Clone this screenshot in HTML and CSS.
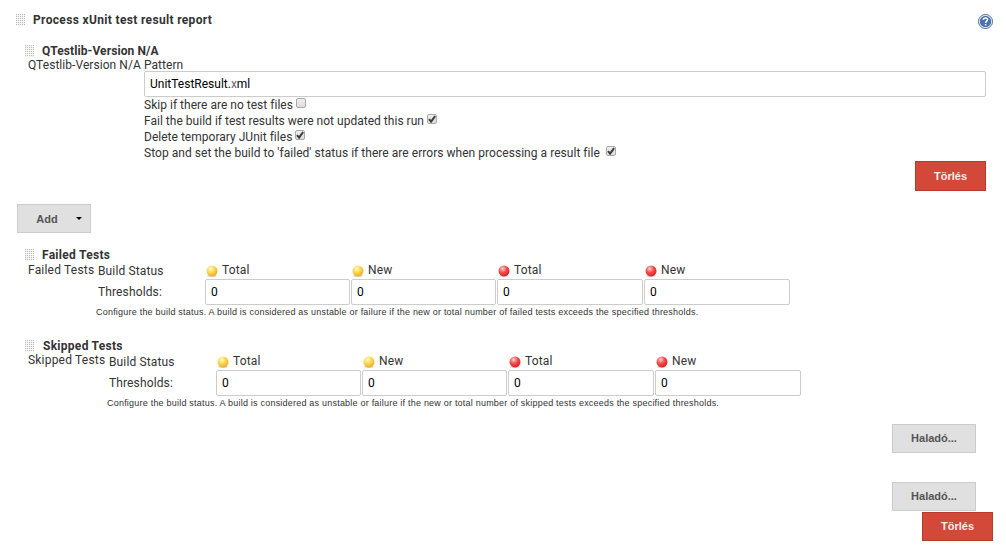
FILE: index.html
```html
<!DOCTYPE html>
<html lang="hu">
<head>
<meta charset="utf-8">
<title>xUnit</title>
<link rel="stylesheet" href="styles.css">
</head>
<body>
<svg width="0" height="0" class="defs">
  <defs>
    <pattern id="dots" width="2" height="2" patternUnits="userSpaceOnUse"><rect width="2" height="2" fill="#f5f5f3"/><rect width="1" height="1" fill="#bcbcb6"/></pattern>
    <radialGradient id="yellow" cx=".38" cy=".3" r=".7"><stop offset="0" stop-color="#fffbd0"/><stop offset=".5" stop-color="#fbd850"/><stop offset="1" stop-color="#f2ae2c"/></radialGradient>
    <radialGradient id="red" cx=".38" cy=".3" r=".7"><stop offset="0" stop-color="#ffd0d0"/><stop offset=".5" stop-color="#f25050"/><stop offset="1" stop-color="#e02020"/></radialGradient>
    <symbol id="grip" viewBox="0 0 10 12"><rect width="9" height="12" fill="url(#dots)"/></symbol>
    <symbol id="ball-y" viewBox="0 0 12 12"><ellipse cx="6" cy="10.8" rx="4.7" ry="1.1" fill="#ccc"/><circle cx="6" cy="5.9" r="5.5" fill="url(#yellow)"/></symbol>
    <symbol id="ball-r" viewBox="0 0 12 12"><ellipse cx="6" cy="10.8" rx="4.7" ry="1.1" fill="#ccc"/><circle cx="6" cy="5.9" r="5.5" fill="url(#red)"/></symbol>
    <symbol id="check" viewBox="0 0 10 10"><path d="M2 5.2 4.1 7.6 8.1 2.2" fill="none" stroke="#3c3c3c" stroke-width="2"/></symbol>
  </defs>
</svg>
<main class="page">
  <header class="title-row">
    <svg class="grip"><use href="#grip"/></svg>
    <b class="w-title">Process xUnit test result report</b>
    <svg class="help" viewBox="0 0 15 15"><circle cx="7.5" cy="7.5" r="7" fill="#fff" stroke="#44689f" stroke-width="1"/><circle cx="7.5" cy="7.5" r="5.7" fill="#4a72ac"/><path d="M5.4 5.8C5.4 3.4 9.6 3.3 9.6 5.6 9.6 7.1 7.6 7.1 7.6 8.9M7.6 10v1.5" fill="none" stroke="#fff" stroke-width="1.5"/></svg>
  </header>

  <section class="qtest">
    <div class="section-title"><svg class="grip"><use href="#grip"/></svg><b class="w-qtitle">QTestlib-Version N/A</b></div>
    <div class="label-row"><span>QTestlib-Version N/A Pattern</span></div>
    <div class="fields">
      <div class="input wide"><span>UnitTestResult.<span class="dim">x</span>ml</span></div>
      <div class="option"><span>Skip if there are no test files</span><i class="box"></i></div>
      <div class="option"><span>Fail the build if test results were not updated this run</span><i class="box"><svg><use href="#check"/></svg></i></div>
      <div class="option"><span>Delete temporary JUnit files</span><i class="box"><svg><use href="#check"/></svg></i></div>
      <div class="option last"><span>Stop and set the build to 'failed' status if there are errors when processing a result file</span><i class="box"><svg><use href="#check"/></svg></i></div>
    </div>
    <div class="actions"><div class="button danger"><span>Törlés</span></div></div>
  </section>

  <div class="button add"><span>Add</span><i class="caret"></i></div>

  <section class="thresholds failed">
    <div class="section-title"><svg class="grip"><use href="#grip"/></svg><b>Failed Tests</b></div>
    <div class="body">
      <span class="name">Failed Tests</span>
      <div class="grid">
        <span class="status">Build Status</span>
        <span class="head"><svg><use href="#ball-y"/></svg>Total</span>
        <span class="head"><svg><use href="#ball-y"/></svg>New</span>
        <span class="head"><svg><use href="#ball-r"/></svg>Total</span>
        <span class="head"><svg><use href="#ball-r"/></svg>New</span>
        <span class="thr">Thresholds:</span>
        <div class="input">0</div><div class="input">0</div><div class="input">0</div><div class="input">0</div>
        <p class="note"><span>Configure the build status. A build is considered as unstable or failure if the new or total number of failed tests exceeds the specified thresholds.</span></p>
      </div>
    </div>
  </section>

  <section class="thresholds skipped">
    <div class="section-title"><svg class="grip"><use href="#grip"/></svg><b>Skipped Tests</b></div>
    <div class="body">
      <span class="name">Skipped Tests</span>
      <div class="grid">
        <span class="status">Build Status</span>
        <span class="head"><svg><use href="#ball-y"/></svg>Total</span>
        <span class="head"><svg><use href="#ball-y"/></svg>New</span>
        <span class="head"><svg><use href="#ball-r"/></svg>Total</span>
        <span class="head"><svg><use href="#ball-r"/></svg>New</span>
        <span class="thr">Thresholds:</span>
        <div class="input">0</div><div class="input">0</div><div class="input">0</div><div class="input">0</div>
        <p class="note"><span>Configure the build status. A build is considered as unstable or failure if the new or total number of skipped tests exceeds the specified thresholds.</span></p>
      </div>
    </div>
  </section>

  <footer class="bottom">
    <div class="button advanced"><span>Haladó...</span></div>
    <div class="button advanced"><span>Haladó...</span></div>
    <div class="button danger"><span>Törlés</span></div>
  </footer>
</main>
</body>
</html>
```
FILE: styles.css
```css
* { box-sizing: border-box; }
body { margin: 0; background: #fff; color: #333; font: 12px/16px Roboto, sans-serif; letter-spacing: .2px; white-space: nowrap; }
.defs { position: absolute; }
.page { width: 1006px; height: 551px; overflow: hidden; display: flex; flex-direction: column; padding-top: 12px; }
svg { display: block; flex: none; }
.grip { width: 10px; height: 12px; }
.title-row { display: flex; align-items: center; height: 16px; padding: 0 13px 0 16px; gap: 7px; }
.w-title { letter-spacing: .34px; }
.w-qtitle { letter-spacing: .1px; }
.help { width: 15px; height: 15px; margin: 3px 0 0 auto; }
.section-title { display: flex; align-items: center; height: 16px; gap: 7px; padding-left: 25px; }
.thresholds .section-title { letter-spacing: .28px; }
.skipped .section-title { gap: 8px; }
.qtest { padding-top: 15px; height: 176px; }
.label-row { height: 12px; line-height: 12px; padding-left: 28px; letter-spacing: .06px; }
.fields { padding: 0 20px 0 144px; letter-spacing: .02px; }
.input { height: 26px; border: 1px solid #ccc; border-radius: 2px; padding-left: 5px; line-height: 25px; color: #000; background: #fff; }
.wide { letter-spacing: 0; }
.dim { color: #666; }
.option { height: 16px; display: flex; gap: 3px; }
.option.last { gap: 6px; letter-spacing: .04px; }
.box { width: 10px; height: 10px; margin-top: 1px; border: 1px solid #aaa; border-radius: 2px; background: linear-gradient(#eee, #ddd); }
.box svg { width: 10px; height: 10px; margin: -1px; }
.actions { display: flex; justify-content: flex-end; padding-right: 20px; }
.button { height: 29px; display: flex; align-items: center; justify-content: center; border: 1px solid #ccc; background: #e0e0e0; color: #555; font: bold 11px "Liberation Sans", Arial, sans-serif; letter-spacing: 0; padding-bottom: 1px; }
.danger { width: 71px; height: 30px; background: #d24939; border-color: #b93a2c; color: #f8eeee; padding-bottom: 0; }
.bottom .danger { height: 29px; padding-bottom: 1px; }
.add { width: 74px; margin-left: 17px; gap: 18px; padding: 0 0 0 10px; }
.caret { border: 3.5px solid transparent; border-top-color: #000; border-bottom: 0; }
.thresholds { height: 91px; }
.failed { margin-top: 14px; }
.body { display: flex; padding-left: 28px; letter-spacing: .13px; }
.name { width: 68px; height: 14px; line-height: 14px; letter-spacing: .2px; }
.skipped .name { width: 79px; line-height: 13px; }
.grid { display: grid; grid-template-columns: 108px 145px 145px 146px 146px; column-gap: 1px; grid-template-rows: 16px 26px 14px; }
.status, .thr { padding-left: 2px; }
.thr { line-height: 26px; }
.head { display: flex; gap: 4px; line-height: 14px; padding-left: 1px; }
.head svg { width: 12px; height: 12px; margin-top: 2px; }
.note { grid-column: 1 / -1; margin: 0; font: 9px/14px "Liberation Sans", Arial, sans-serif; letter-spacing: .215px; }
.bottom { display: flex; flex-direction: column; align-items: flex-end; padding: 0 13px 0 0; margin-top: -5px; }
.advanced { width: 84px; margin-right: 17px; margin-bottom: 29px; }
.advanced + .advanced { margin-bottom: 1px; }
```
